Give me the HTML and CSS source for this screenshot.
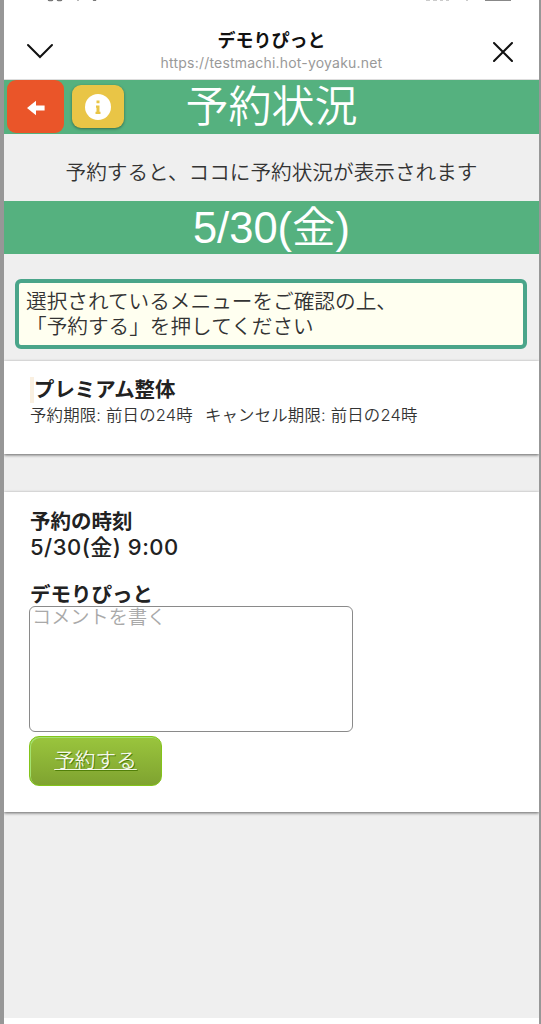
FILE: index.html
```html
<!DOCTYPE html>
<html lang="ja">
<head>
    <meta charset="UTF-8">
    <meta name="viewport" content="width=device-width, initial-scale=1.0">
    <title>デモりぴっと</title>
    <link rel="stylesheet" href="styles.css">
</head>
<body>
    <div class="status-bar">
        <svg width="535" height="3" viewBox="4 0 535 3" fill="none" stroke="#777" stroke-width="1.4">
            <path d="M48 0q2.500 1 5 0M57 0q2.500 1 5 0M78 0v.8M93 0q2 .8 3 0"/>
            <path d="M426 0h4M433 0h4M440 0h3M446 0h3M466 0h2" stroke="#bbb"/>
            <path d="M485 0h26" stroke="#888" stroke-width="2"/>
        </svg>
    </div>
    <header class="browser-header">
        <svg class="icon-down" width="28" height="16" viewBox="0 0 28 16"><path d="M2 2l12 12L26 2"/></svg>
        <div class="site">
            <div class="site-name">デモりぴっと</div>
            <div class="site-url">https://testmachi.hot-yoyaku.net</div>
        </div>
        <svg class="icon-close" width="20" height="20" viewBox="0 0 20 20"><path d="M1 1l18 18M19 1L1 19"/></svg>
    </header>

    <main>
        <div class="title-bar">
            <div class="nav-buttons">
                <button class="back-button" type="button" aria-label="戻る">
                    <svg width="18" height="16" viewBox="0 0 18 16" fill="#fff"><path d="M0 8L9 .8V5.600H17.600V10.400H9V15.200Z"/></svg>
                </button>
                <button class="info-button" type="button" aria-label="案内">
                    <svg width="26" height="26" viewBox="0 0 26 26">
                        <circle cx="13" cy="13" r="13" fill="#fff"/>
                        <path d="M11.500 6.500h3v2.700h-3zM11 11.500h3.500V17.800h1V20h-5v-2.200h1V13.700H11z" fill="#e9c546"/>
                    </svg>
                </button>
            </div>
            <h1>予約状況</h1>
        </div>
        <p class="lead">予約すると、ココに予約状況が表示されます</p>
        <h2 class="date-bar">5/30(金)</h2>

        <div class="notice">選択されているメニューをご確認の上、<br>「予約する」を押してください</div>

        <section class="card menu-card">
            <h3 class="menu-name">プレミアム整体</h3>
            <div class="limits"><span>予約期限: 前日の24時</span><span>キャンセル期限: 前日の24時</span></div>
        </section>

        <section class="card form-card">
            <div class="strong">予約の時刻</div>
            <div class="strong time">5/30(金) 9:00</div>
            <div class="strong shop">デモりぴっと</div>
            <textarea placeholder="コメントを書く"></textarea>
            <a class="submit-button" href="#">予約する</a>
        </section>
    </main>
    <footer class="bottom-bar"></footer>
</body>
</html>
```

FILE: styles.css
```css
* {
    box-sizing: border-box;
}
body {
    margin: 0;
    height: 1024px;
    display: flex;
    flex-direction: column;
    overflow: hidden;
    border-left: 4px solid #979797;
    border-right: 2px solid #979797;
    background: #efefef;
    color: #333;
    font-family: "Liberation Sans", "Noto Sans CJK JP", sans-serif;
    font-size: 20.650px;
    font-weight: 350;
}
h1, h2, h3, p {
    margin: 0;
}
.status-bar {
    height: 24px;
    background: #fff;
}
.status-bar svg {
    display: block;
}
.browser-header {
    height: 56px;
    display: flex;
    justify-content: space-between;
    padding: 0 26px 0 22px;
    background: #fff;
    border-bottom: 1px solid #ddd;
}
.browser-header svg {
    fill: none;
    stroke: #111;
    stroke-width: 2;
    stroke-linecap: round;
}
.icon-down {
    margin-top: 19px;
}
.icon-close {
    margin-top: 18px;
}
.site {
    padding-top: 5px;
    margin-right: 4px;
    text-align: center;
}
.site-name {
    color: #111;
    font-size: 18px;
    font-weight: 700;
    line-height: 24px;
}
.site-url {
    color: #999;
    font-family: Inter, sans-serif;
    font-size: 14px;
    font-weight: 400;
    letter-spacing: 0.2px;
    line-height: 19px;
}
main {
    flex: 1;
}

/* Green title bars */
.title-bar, .date-bar {
    height: 53.500px;
    background: #55b17f;
    color: #fff;
    font-size: 43px;
    font-weight: 350;
    line-height: 54px;
    text-align: center;
}
.title-bar {
    display: grid;
    grid-template-columns: 1fr auto 1fr;
}
.date-bar {
    font-size: 43.500px;
}
h1 {
    font-size: inherit;
    font-weight: inherit;
}
.nav-buttons {
    display: flex;
    align-items: flex-start;
    gap: 8px;
    padding-left: 3px;
}
.nav-buttons button {
    display: flex;
    align-items: center;
    justify-content: center;
    padding: 0;
    border: 0;
}
.back-button {
    width: 57px;
    height: 53px;
    border-radius: 9px;
    background: #ea5529;
}
.back-button svg {
    margin-top: 3px;
}
.info-button {
    width: 52px;
    height: 43px;
    margin-top: 5px;
    border-radius: 9px;
    background: #e9c546;
    box-shadow: 0 1px 3px rgba(0, 0, 0, 0.4);
}
.lead {
    height: 67px;
    padding-top: 22px;
    line-height: 34px;
    text-align: center;
}

.notice {
    height: 70px;
    margin: 25px 12px 12px 11px;
    padding: 7px 7px 5px;
    border: 4px solid #4aa58a;
    border-radius: 6px;
    background: #fffff0;
    line-height: 24.700px;
}
.card {
    background: #fff;
    box-shadow: 0 1px 3px rgba(0, 0, 0, 0.6);
    padding: 0 26px;
}
.menu-card {
    height: 93px;
    padding-top: 16px;
    margin-bottom: 38px;
}
.menu-name {
    height: 26px;
    border-left: 4px solid #faf0e1;
    color: #222;
    font-size: 20.400px;
    font-weight: 700;
    line-height: 26px;
}
.limits {
    display: flex;
    gap: 12px;
    font-family: Inter, "Noto Sans CJK JP", sans-serif;
    font-size: 16.400px;
    letter-spacing: 0.200px;
    line-height: 25px;
}
.form-card {
    height: 320px;
    padding-top: 18px;
}
.strong {
    color: #222;
    font-size: 20.500px;
    font-weight: 700;
    line-height: 24.500px;
}
.time {
    font-family: Inter, "Noto Sans CJK JP", sans-serif;
    font-size: 22px;
    font-weight: 500;
    letter-spacing: 0.500px;
    line-height: 24px;
}
.shop {
    margin-top: 24px;
}
textarea {
    display: block;
    width: 324px;
    height: 126px;
    margin: -1.500px 0 4px -1px;
    padding: 0 2px;
    border: 1px solid #8a8a8a;
    border-radius: 6px;
    resize: none;
    font-family: inherit;
    font-size: 19.200px;
    font-weight: 350;
    line-height: 21px;
}
textarea::placeholder {
    color: #a9a9a9;
}
.submit-button {
    display: block;
    width: 133px;
    height: 50px;
    margin-left: -1px;
    border: 1px solid #83c41a;
    border-radius: 10px;
    background: linear-gradient(#9ac53d, #7fa330);
    box-shadow: inset 1px 1px 0 #a4e271;
    color: #f4f8ec;
    line-height: 48px;
    text-align: center;
    text-decoration-thickness: 1px;
    text-shadow: 1px 1px 0 #528009;
}
.bottom-bar {
    height: 6px;
    background: #fff;
}
```
